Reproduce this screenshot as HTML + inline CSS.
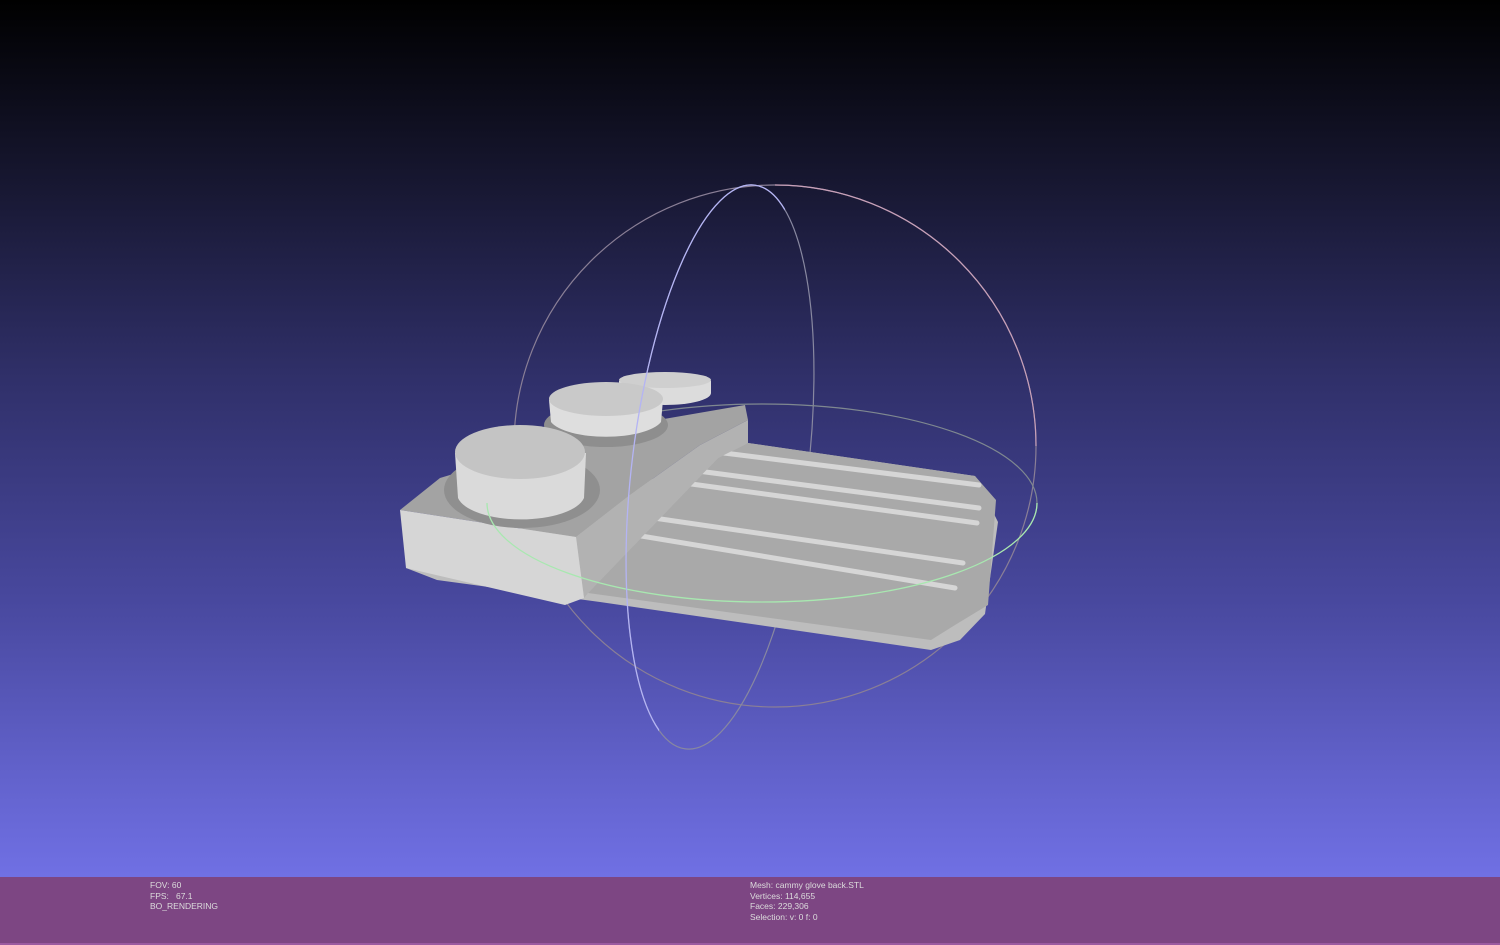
<!DOCTYPE html>
<html><head><meta charset="utf-8"><style>
html,body{margin:0;padding:0;width:1500px;height:945px;overflow:hidden}
body{position:relative;background:#000;font-family:"Liberation Sans",sans-serif}
#bg{position:absolute;left:0;top:0;width:1500px;height:877px;background:linear-gradient(#000 0px,#181833 190px,#30306a 380px,#48489e 600px,#6060c8 760px,#7070e4 877px)}
#bar{position:absolute;left:0;top:877px;width:1500px;height:68px;background:#7d4683;border-bottom:2px solid #9a5aa0;box-sizing:border-box}
.t{position:absolute;color:#dcdcdc;font-size:8.5px;line-height:10.5px;white-space:pre}
svg{position:absolute;left:0;top:0}
</style></head><body>
<div id="bg"></div>
<svg width="1500" height="877" viewBox="0 0 1500 877">
<defs>
<clipPath id="lh"><polygon points="0,0 755,0 755,185 690,750 690,877 0,877"/></clipPath>
</defs>
<!-- back gizmo parts -->
<circle cx="775" cy="446" r="261" fill="none" stroke="#8a7f96" stroke-width="1.2"/>
<ellipse cx="720" cy="467" rx="88" ry="284" transform="rotate(7 720 467)" fill="none" stroke="#8888a0" stroke-width="1.2"/>
<ellipse cx="762" cy="503" rx="275" ry="99" fill="none" stroke="#7f8890" stroke-width="1.2"/>
<!-- base strip -->
<polygon points="406,568 437,580 600,602 931,650 960,640 985,614 998,522 975,476 748,443 437,560" fill="#bdbdbd"/>
<!-- plate top -->
<polygon points="588,593 718,458 748,443 975,476 996,500 988,605 955,625 931,640" fill="#a9a9a9"/>
<g stroke-linecap="round">
<line x1="724" y1="453" x2="979" y2="485" stroke="#d6d6d6" stroke-width="5"/>
<line x1="698" y1="471" x2="979" y2="508" stroke="#d6d6d6" stroke-width="5"/>
<line x1="684" y1="483" x2="977" y2="523" stroke="#d6d6d6" stroke-width="5"/>
<line x1="647" y1="517" x2="963" y2="563" stroke="#d6d6d6" stroke-width="5"/>
<line x1="635" y1="535" x2="955" y2="588" stroke="#d6d6d6" stroke-width="5"/>
</g>
<polygon points="400,510 440,478 600,430 745,405 748,420 700,445 630,495 576,537" fill="#a3a3a3"/>
<polygon points="576,537 630,495 700,445 748,420 748,443 718,458 588,593 584,598" fill="#b2b2b2"/>
<polygon points="400,510 576,537 584,598 565,605 406,568" fill="#d6d6d6"/>
<path d="M619,381 L619,393 A46,12 0 0 0 711,393 L711,381 Z" fill="#dcdcdc"/>
<ellipse cx="665" cy="380" rx="46" ry="8" fill="#cfcfcf"/>
<ellipse cx="606" cy="425" rx="62" ry="22" fill="#8e8e8e"/>
<path d="M549,400 L551,422 A57,20 0 0 0 661,422 L663,400 Z" fill="#dedede"/>
<ellipse cx="606" cy="399" rx="57" ry="17" fill="#c9c9c9"/>
<ellipse cx="522" cy="490" rx="78" ry="38" fill="#8f8f8f"/>
<path d="M455,453 L458,498 A64,26 0 0 0 584,498 L586,453 Z" fill="#dadada"/>
<ellipse cx="520" cy="452" rx="65" ry="27" fill="#c4c4c4"/>
<!-- front gizmo parts -->
<path d="M487,503 A275,99 0 0 0 1037,503" fill="none" stroke="#a8e8b0" stroke-width="1.3"/>
<ellipse cx="720" cy="467" rx="88" ry="284" transform="rotate(7 720 467)" fill="none" stroke="#b4b4f4" stroke-width="1.3" clip-path="url(#lh)"/>
<path d="M775,185 A261,261 0 0 1 1036,446" fill="none" stroke="#c8a0b8" stroke-width="1.2"/>
</svg>
<div id="bar"></div>
<div class="t" style="left:150px;top:880px">FOV: 60
FPS:   67.1
BO_RENDERING</div>
<div class="t" style="left:750px;top:880px">Mesh: cammy glove back.STL
Vertices: 114,655
Faces: 229,306
Selection: v: 0 f: 0</div>
</body></html>
